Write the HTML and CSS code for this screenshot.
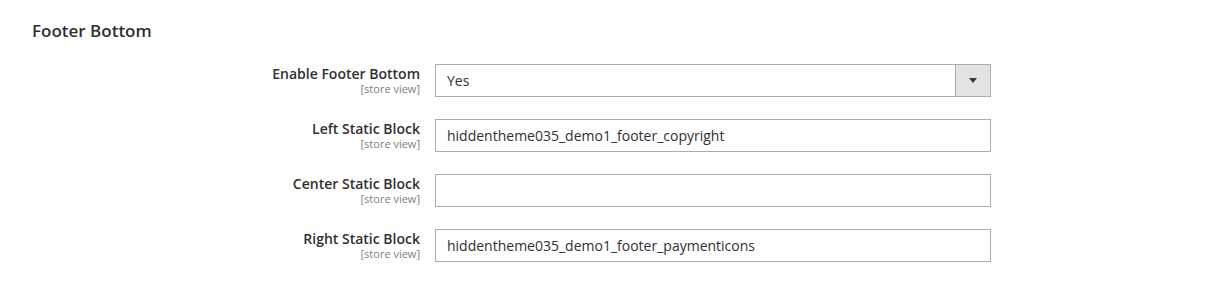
FILE: index.html
```html
<!DOCTYPE html>
<html lang="en">
<head>
    <meta charset="UTF-8">
    <title>Footer Bottom</title>
    <link rel="stylesheet" href="styles.css">
</head>
<body>
    <div class="section">
        <h2 class="section-title">Footer Bottom</h2>

        <div class="fields">
            <div class="field">
                <div class="label">
                    <span>Enable Footer Bottom</span>
                    <span class="scope">[store view]</span>
                </div>
                <div class="control">
                    <div class="select">
                        <span class="select-value">Yes</span>
                        <span class="select-arrow"></span>
                    </div>
                </div>
            </div>

            <div class="field">
                <div class="label">
                    <span>Left Static Block</span>
                    <span class="scope">[store view]</span>
                </div>
                <div class="control">
                    <input type="text" class="input-text" value="hiddentheme035_demo1_footer_copyright">
                </div>
            </div>

            <div class="field">
                <div class="label">
                    <span>Center Static Block</span>
                    <span class="scope">[store view]</span>
                </div>
                <div class="control">
                    <input type="text" class="input-text" value="">
                </div>
            </div>

            <div class="field">
                <div class="label">
                    <span>Right Static Block</span>
                    <span class="scope">[store view]</span>
                </div>
                <div class="control">
                    <input type="text" class="input-text" value="hiddentheme035_demo1_footer_paymenticons">
                </div>
            </div>
        </div>
    </div>
</body>
</html>
```

FILE: styles.css
```css
body {
    margin: 0;
    background: #fff;
    font-family: "Open Sans", Arial, sans-serif;
    color: #303030;
}
.section {
    padding: 19px 0 0 32px;
}
.section-title {
    margin: 0 0 21px 0;
    font-size: 17px;
    font-weight: 600;
    color: #303030;
    line-height: 24px;
}
.fields {
    display: flex;
    flex-direction: column;
    gap: 22px;
}
.field {
    display: flex;
    gap: 15px;
    margin-left: -32px;
}
.label {
    width: 420px;
    display: flex;
    flex-direction: column;
    align-items: flex-end;
    padding-top: 1px;
    font-size: 14px;
    font-weight: 600;
    line-height: 18px;
}
.scope {
    font-size: 11px;
    font-weight: 400;
    color: #808080;
    line-height: 12px;
}
.control {
    width: 556px;
}
.input-text,
.select {
    box-sizing: border-box;
    width: 100%;
    height: 33px;
    border: 1px solid #adadad;
    background: #fff;
    font-family: "Open Sans", Arial, sans-serif;
    font-size: 14px;
    color: #303030;
    padding: 0 11px;
    outline: none;
    border-radius: 0;
}
.select {
    display: flex;
    align-items: center;
    padding-right: 0;
}
.select-value {
    flex: 1;
}
.select-arrow {
    width: 34px;
    height: 31px;
    border-left: 1px solid #adadad;
    background: #e3e3e3;
    display: flex;
    align-items: center;
    justify-content: center;
}
.select-arrow::after {
    content: "";
    border-left: 4px solid transparent;
    border-right: 4px solid transparent;
    border-top: 5px solid #41362f;
}
```
